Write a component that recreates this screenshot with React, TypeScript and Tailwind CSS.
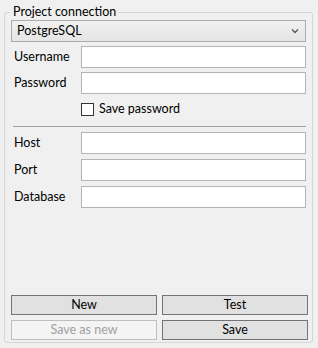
import React from 'react';

const font = "font-['Lato','Segoe_UI','Noto_Sans',sans-serif]";

const Field = ({ label }: { label: string }) => (
  <div className="flex items-center h-[22px]">
    <label className="w-[70px] pl-[3px] text-[12.5px] text-black">{label}</label>
    <input className="flex-1 h-[22px] bg-white border border-[#b4b4b4] outline-none px-1 text-[12px]" />
  </div>
);

const Btn = ({ children, disabled }: { children: React.ReactNode; disabled?: boolean }) => (
  <button
    disabled={disabled}
    className={
      disabled
        ? 'flex-1 h-[20px] bg-[#f4f4f4] border border-[#bfbfbf] text-[#a0a0a0] text-[12.5px] leading-none'
        : 'flex-1 h-[20px] bg-[#e1e1e1] border border-[#747474] text-black text-[12.5px] leading-none'
    }
  >
    {children}
  </button>
);

export default function App() {
  return (
    <div className={`w-[318px] h-[348px] bg-[#f0f0f0] pt-[4px] pl-[4px] ${font}`}>
      <fieldset className="w-[309px] h-[339px] border border-[#d5d5d5] rounded-[3px] pl-[6px] pr-[6px] flex flex-col">
        <legend className="ml-0 px-[2px] text-[12.5px] leading-[16px] text-black">Project connection</legend>

        <div className="h-[22px] mt-0 border border-[#acacac] bg-gradient-to-b from-[#f0f0f0] to-[#e5e5e5] flex items-center justify-between pl-[5px] pr-[5px]">
          <span className="text-[12.5px] text-black">PostgreSQL</span>
          <svg width="8" height="6" viewBox="0 0 8 6" className="mr-[1px]">
            <path d="M1 1.5 L4 4.5 L7 1.5" stroke="#555" strokeWidth="1.4" fill="none" />
          </svg>
        </div>

        <div className="mt-[4px] flex flex-col gap-[4px]">
          <Field label="Username" />
          <Field label="Password" />
        </div>

        <label className="mt-[9px] ml-[70px] flex items-center gap-[5px] h-[13px]">
          <span className="w-[13px] h-[13px] border border-[#333] bg-white" />
          <span className="text-[12.5px] text-black">Save password</span>
        </label>

        <div className="mt-[10px] ml-[2px] h-px bg-[#a0a0a0]" />

        <div className="mt-[5px] flex flex-col gap-[5px]">
          <Field label="Host" />
          <Field label="Port" />
          <Field label="Database" />
        </div>

        <div className="mt-auto mb-[2px] flex flex-col gap-[5px] mr-[-2px]">
          <div className="flex gap-[5px]">
            <Btn>New</Btn>
            <Btn>Test</Btn>
          </div>
          <div className="flex gap-[5px]">
            <Btn disabled>Save as new</Btn>
            <Btn>Save</Btn>
          </div>
        </div>
      </fieldset>
    </div>
  );
}
